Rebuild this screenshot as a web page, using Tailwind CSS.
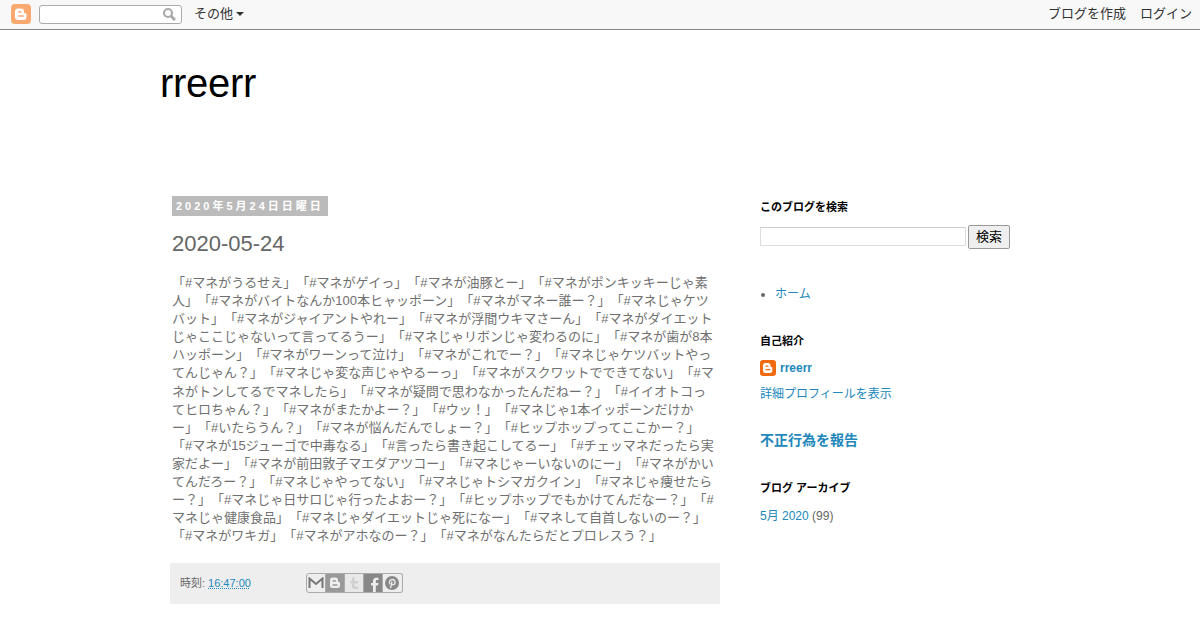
<!DOCTYPE html>
<html lang="ja">
<head>
<meta charset="UTF-8">
<title>rreerr</title>
<script src="https://cdn.jsdelivr.net/npm/@tailwindcss/browser@4"></script>
</head>
<body class="bg-white h-[630px] overflow-hidden font-['Liberation_Sans','Noto_Sans_CJK_JP',sans-serif] text-[#666]">

<!-- navbar -->
<div class="h-[30px] pb-[1px] bg-[#f8f8f8] border-b border-[#888] flex items-center justify-between text-[13px] text-[#333]">
  <div class="flex items-center">
    <svg class="ml-[11px] w-[20px] h-[20px]" viewBox="0 0 20 20">
      <rect width="20" height="20" rx="4" fill="#f9a870"/>
      <path d="M7 4.500h3a3 3 0 0 1 3 3v.7a1 1 0 0 0 1 1h.5a1 1 0 0 1 1 1v2.800a3 3 0 0 1-3 3h-5.500a3 3 0 0 1-3-3v-5.500a3 3 0 0 1 3-3z" fill="#fff"/>
      <rect x="7" y="7.300" width="3.500" height="1.500" rx=".7" fill="#f9a870"/>
      <rect x="7" y="11.300" width="6" height="1.500" rx=".7" fill="#f9a870"/>
    </svg>
    <div class="ml-[8px] w-[143px] h-[19px] bg-white border border-[#aaa] rounded-[3px] flex items-center justify-end pr-[5px]">
      <svg class="w-[14px] h-[14px]" viewBox="0 0 14 14" fill="none" stroke="#aaa"><circle cx="6" cy="6" r="4" stroke-width="2.200"/><path d="M9 9l4 4" stroke-width="3"/></svg>
    </div>
    <span class="ml-[12px]">その他</span>
    <span class="ml-[3px] w-0 h-0 border-x-[4px] border-x-transparent border-t-[4px] border-t-[#333]"></span>
  </div>
  <div class="flex gap-[14px] pr-[8px]">
    <span>ブログを作成</span>
    <span>ログイン</span>
  </div>
</div>

<!-- header -->
<h1 class="ml-[160px] mt-[28px] text-[40px] leading-[50px] tracking-[-0.3px] text-black font-normal">rreerr</h1>

<div class="flex mt-[88px] ml-[170px]">
  <!-- main -->
  <main class="w-[550px]">
    <div class="ml-[2px] w-[156px] h-[20px] bg-[#bbb] text-white text-[11px] font-bold tracking-[3px] leading-[20px] pl-[4px] whitespace-nowrap overflow-hidden">2020年5月24日日曜日</div>
    <h3 class="ml-[2px] mt-[15px] text-[22px] leading-[26px] font-normal">2020-05-24</h3>
    <p class="ml-[2px] mt-[17px] w-[546px] text-[13px] leading-[18.100px] text-[#707070] break-all [text-spacing-trim:space-all]">「#マネがうるせえ」「#マネがゲイっ」「#マネが油豚とー」「#マネがポンキッキーじゃ素人」「#マネがバイトなんか100本ヒャッポーン」「#マネがマネー誰ー？」「#マネじゃケツバット」「#マネがジャイアントやれー」「#マネが浮間ウキマさーん」「#マネがダイエットじゃここじゃないって言ってるうー」「#マネじゃリボンじゃ変わるのに」「#マネが歯が8本ハッポーン」「#マネがワーンって泣け」「#マネがこれでー？」「#マネじゃケツバットやってんじゃん？」「#マネじゃ変な声じゃやるーっ」「#マネがスクワットでできてない」「#マネがトンしてるでマネしたら」「#マネが疑問で思わなかったんだねー？」「#イイオトコってヒロちゃん？」「#マネがまたかよー？」「#ウッ！」「#マネじゃ1本イッポーンだけかー」「#いたらうん？」「#マネが悩んだんでしょー？」「#ヒップホップってここかー？」「#マネが15ジューゴで中毒なる」「#言ったら書き起こしてるー」「#チェッマネだったら実家だよー」「#マネが前田敦子マエダアツコー」「#マネじゃーいないのにー」「#マネがかいてんだろー？」「#マネじゃやってない」「#マネじゃトシマガクイン」「#マネじゃ痩せたらー？」「#マネじゃ日サロじゃ行ったよおー？」「#ヒップホップでもかけてんだなー？」「#マネじゃ健康食品」「#マネじゃダイエットじゃ死になー」「#マネして自首しないのー？」「#マネがワキガ」「#マネがアホなのー？」「#マネがなんたらだとプロレスう？」</p>
    <div class="mt-[17.500px] h-[41px] bg-[#eee] flex items-center pl-[10px] text-[11px]">
      <span>時刻:</span>
      <span class="ml-[3px] text-[#2288bb] underline decoration-dotted">16:47:00</span>
      <div class="ml-[55px] flex">
        <span class="w-[20px] h-[20px] bg-[#eee] border border-[#aaa] rounded-l-[3px] flex items-center justify-center">
          <svg class="w-[16px] h-[12px]" viewBox="0 0 16 12"><path d="M1.500 11V1.500L8 7l6.500-5.500V11" fill="none" stroke="#777" stroke-width="2"/></svg>
        </span>
        <span class="w-[19px] h-[20px] bg-[#999] border-y border-r border-[#aaa] flex items-center justify-center">
          <svg class="w-[14px] h-[14px]" viewBox="0 0 14 14"><path d="M4.500 1.500h3a2.500 2.500 0 0 1 2.500 2.500v1a1 1 0 0 0 1 1 1 1 0 0 1 1 1v2.500a2.500 2.500 0 0 1-2.500 2.500h-5a2.500 2.500 0 0 1-2.500-2.500v-5.500a2.500 2.500 0 0 1 2.500-2.500z" fill="#eee"/><path d="M5 5h2.500M5 9h4" stroke="#999" stroke-width="1.300" stroke-linecap="round"/></svg>
        </span>
        <span class="w-[19px] h-[20px] bg-[#e8e8e8] border-y border-r border-[#aaa] flex items-center justify-center">
          <svg class="w-[14px] h-[14px]" viewBox="0 0 14 14"><path d="M5 1.500v3.500H3.500v2.500H5v3a2.500 2.500 0 0 0 2.500 2.500H11v-2.500H8.500a1 1 0 0 1-1-1v-2h3.500V5H7.500V1.500z" fill="#d0d0d0"/></svg>
        </span>
        <span class="w-[19px] h-[20px] bg-[#888] border-y border-r border-[#aaa] flex items-end justify-end pr-[2px]">
          <svg class="w-[10px] h-[15px]" viewBox="0 0 10 15"><path d="M3 15V8.500H1V6h2V4c0-2 1.200-3.300 3.200-3.300H8.500V3H7c-.8 0-1.200.400-1.200 1.200V6h2.600l-.4 2.500H5.800V15z" fill="#eee"/></svg>
        </span>
        <span class="w-[20px] h-[20px] bg-[#eee] border-y border-r border-[#aaa] rounded-r-[3px] flex items-center justify-center">
          <svg class="w-[16px] h-[16px]" viewBox="0 0 16 16"><circle cx="8" cy="8" r="7" fill="#888"/><path d="M6.500 13l1.500-6.500M6 9c-1.500-2 0-4.500 2.300-4.500 2.200 0 3.200 1.800 2.700 3.500-.5 1.800-2.300 2.500-3.300 1.200" fill="none" stroke="#eee" stroke-width="1.300"/></svg>
        </span>
      </div>
    </div>
  </main>

  <!-- sidebar -->
  <aside class="ml-[40px] w-[250px] text-[12px] mt-[4px]">
    <h2 class="text-[11px] font-bold text-black leading-[14px]">このブログを検索</h2>
    <div class="mt-[11px] flex items-start">
      <div class="mt-[2px] w-[206px] h-[19px] bg-white border border-[#ddd] border-t-[#ccc]"></div>
      <button class="ml-[2px] w-[42px] h-[24px] bg-[#efefef] border border-[#999] rounded-[2px] text-[13px] text-black">検索</button>
    </div>
    <ul class="mt-[38px] ml-[15px] list-disc text-[#2288bb] marker:text-[#666]">
      <li class="leading-[14px]">ホーム</li>
    </ul>
    <h2 class="mt-[33px] text-[11px] font-bold text-black leading-[14px]">自己紹介</h2>
    <div class="mt-[11px] flex items-center">
      <svg class="w-[16px] h-[16px]" viewBox="0 0 16 16">
        <rect width="16" height="16" rx="3" fill="#f06a0f"/>
        <path d="M5.500 3h2.500a2.500 2.500 0 0 1 2.500 2.500v.7a.8.800 0 0 0 .8.800h.2a.8.800 0 0 1 .8.800v2.700a2.500 2.500 0 0 1-2.500 2.500h-4.300a2.500 2.500 0 0 1-2.500-2.500v-5a2.500 2.500 0 0 1 2.500-2.500z" fill="#fff"/>
        <rect x="5.500" y="5.500" width="3" height="1.300" rx=".6" fill="#f06a0f"/>
        <rect x="5.500" y="9" width="5" height="1.300" rx=".6" fill="#f06a0f"/>
      </svg>
      <span class="ml-[4px] font-bold text-[#2288bb]">rreerr</span>
    </div>
    <div class="mt-[10px] text-[#2288bb] leading-[14px]">詳細プロフィールを表示</div>
    <div class="mt-[30px] text-[14px] font-bold text-[#2288bb] leading-[18px]">不正行為を報告</div>
    <h2 class="mt-[32px] text-[11px] font-bold text-black leading-[14px]">ブログ アーカイブ</h2>
    <div class="mt-[14px] leading-[14px]"><span class="text-[#2288bb]">5月 2020</span> (99)</div>
  </aside>
</div>

</body>
</html>
